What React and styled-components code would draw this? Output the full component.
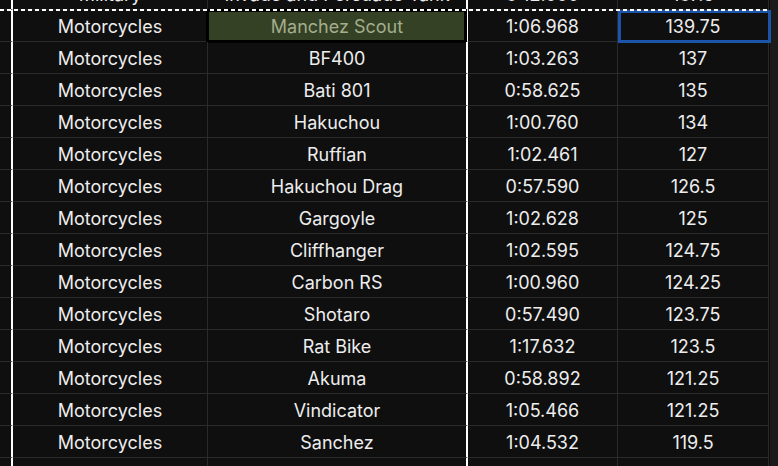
import React from "react";
import styled, { createGlobalStyle, css } from "styled-components";

const rows = [
  ["Motorcycles", "Manchez Scout", "1:06.968", "139.75"],
  ["Motorcycles", "BF400", "1:03.263", "137"],
  ["Motorcycles", "Bati 801", "0:58.625", "135"],
  ["Motorcycles", "Hakuchou", "1:00.760", "134"],
  ["Motorcycles", "Ruffian", "1:02.461", "127"],
  ["Motorcycles", "Hakuchou Drag", "0:57.590", "126.5"],
  ["Motorcycles", "Gargoyle", "1:02.628", "125"],
  ["Motorcycles", "Cliffhanger", "1:02.595", "124.75"],
  ["Motorcycles", "Carbon RS", "1:00.960", "124.25"],
  ["Motorcycles", "Shotaro", "0:57.490", "123.75"],
  ["Motorcycles", "Rat Bike", "1:17.632", "123.5"],
  ["Motorcycles", "Akuma", "0:58.892", "121.25"],
  ["Motorcycles", "Vindicator", "1:05.466", "121.25"],
  ["Motorcycles", "Sanchez", "1:04.532", "119.5"],
  ["", "", "", ""],
];

const GlobalStyle = createGlobalStyle`
  html, body {
    margin: 0;
    background: #0f0f0f;
    overflow: hidden;
  }
`;

const Sheet = styled.div`
  width: 778px;
  height: 466px;
  overflow: hidden;
  background: #0f0f0f;
  font-family: "Inter", "Liberation Sans", sans-serif;
  font-size: 18px;
  color: #ededed;
`;

const Row = styled.div`
  position: relative;
  display: grid;
  grid-template-columns: 13px 195px 260px 150px 151px 9px;
  height: 32px;

  ${(p) =>
    p.$copied &&
    css`
      margin-top: -22px;
      &::after {
        content: "";
        position: absolute;
        left: 0;
        right: 10px;
        bottom: -1px;
        height: 2px;
        background: repeating-linear-gradient(
          90deg,
          #ffffff 0 4px,
          transparent 4px 7px
        );
        z-index: 3;
      }
    `}
`;

const Cell = styled.div`
  position: relative;
  box-sizing: border-box;
  display: flex;
  align-items: center;
  justify-content: center;
  padding-top: 2px;
  border-right: 1px solid #2a2a2a;
  border-bottom: 1px solid #2a2a2a;
  white-space: nowrap;
  overflow: visible;

  ${(p) =>
    p.$edge &&
    css`
      border-right: 2px solid #ffffff;
    `}

  ${(p) =>
    p.$active &&
    css`
      color: #a4ad8c;
      &::before {
        content: "";
        position: absolute;
        left: -2px;
        top: -1px;
        right: -1px;
        bottom: -2px;
        background: #344125;
        border: 3px solid #000000;
        z-index: 0;
      }
      & > span {
        position: relative;
        z-index: 1;
      }
    `}

  ${(p) =>
    p.$picked &&
    css`
      &::before {
        content: "";
        position: absolute;
        left: 0;
        top: 0;
        right: -3px;
        bottom: -2px;
        border: 3px solid #1b54a8;
        z-index: 2;
      }
    `}
`;

const Band = styled.div`
  background: #1b1b1b;
  border-left: 1px solid #0c0c0c;
`;

export default function App() {
  return (
    <>
      <GlobalStyle />
      <Sheet>
        <Row $copied>
          <Cell $edge />
          <Cell>Military</Cell>
          <Cell $edge>Invade and Persuade Tank</Cell>
          <Cell>3:12.000</Cell>
          <Cell>137.5</Cell>
          <Band />
        </Row>
        {rows.map((r, i) => (
          <Row key={i}>
            <Cell $edge />
            <Cell>{r[0]}</Cell>
            <Cell $edge $active={i === 0}>
              <span>{r[1]}</span>
            </Cell>
            <Cell>{r[2]}</Cell>
            <Cell $picked={i === 0}>{r[3]}</Cell>
            <Band />
          </Row>
        ))}
      </Sheet>
    </>
  );
}
